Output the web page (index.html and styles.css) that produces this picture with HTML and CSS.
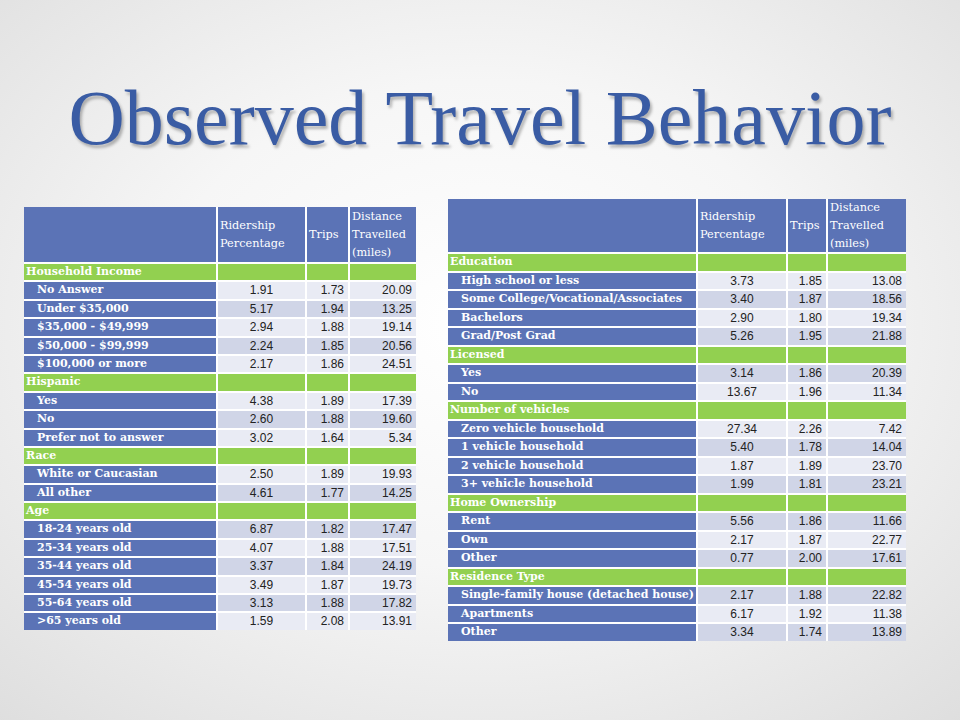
FILE: index.html
```html
<!DOCTYPE html>
<html>
<head>
<meta charset="utf-8">
<link rel="stylesheet" href="styles.css">
</head>
<body>
<div class="slide">
  <h1 class="title">Observed Travel Behavior</h1>
  <div class="tables">
    <div class="tbl tbl-left">
      <div class="hd"></div><div class="hd">Ridership Percentage</div><div class="hd">Trips</div><div class="hd">Distance Travelled (miles)</div>

      <div class="row cat"><div class="lab">Household Income</div><div></div><div></div><div></div></div>
      <div class="row"><div class="lab">No Answer</div><div class="c">1.91</div><div class="r">1.73</div><div class="r">20.09</div></div>
      <div class="row dk"><div class="lab">Under $35,000</div><div class="c">5.17</div><div class="r">1.94</div><div class="r">13.25</div></div>
      <div class="row"><div class="lab">$35,000 - $49,999</div><div class="c">2.94</div><div class="r">1.88</div><div class="r">19.14</div></div>
      <div class="row dk"><div class="lab">$50,000 - $99,999</div><div class="c">2.24</div><div class="r">1.85</div><div class="r">20.56</div></div>
      <div class="row"><div class="lab">$100,000 or more</div><div class="c">2.17</div><div class="r">1.86</div><div class="r">24.51</div></div>
      <div class="row cat"><div class="lab">Hispanic</div><div></div><div></div><div></div></div>
      <div class="row"><div class="lab">Yes</div><div class="c">4.38</div><div class="r">1.89</div><div class="r">17.39</div></div>
      <div class="row dk"><div class="lab">No</div><div class="c">2.60</div><div class="r">1.88</div><div class="r">19.60</div></div>
      <div class="row"><div class="lab">Prefer not to answer</div><div class="c">3.02</div><div class="r">1.64</div><div class="r">5.34</div></div>
      <div class="row cat"><div class="lab">Race</div><div></div><div></div><div></div></div>
      <div class="row"><div class="lab">White or Caucasian</div><div class="c">2.50</div><div class="r">1.89</div><div class="r">19.93</div></div>
      <div class="row dk"><div class="lab">All other</div><div class="c">4.61</div><div class="r">1.77</div><div class="r">14.25</div></div>
      <div class="row cat"><div class="lab">Age</div><div></div><div></div><div></div></div>
      <div class="row dk"><div class="lab">18-24 years old</div><div class="c">6.87</div><div class="r">1.82</div><div class="r">17.47</div></div>
      <div class="row"><div class="lab">25-34 years old</div><div class="c">4.07</div><div class="r">1.88</div><div class="r">17.51</div></div>
      <div class="row dk"><div class="lab">35-44 years old</div><div class="c">3.37</div><div class="r">1.84</div><div class="r">24.19</div></div>
      <div class="row"><div class="lab">45-54 years old</div><div class="c">3.49</div><div class="r">1.87</div><div class="r">19.73</div></div>
      <div class="row dk"><div class="lab">55-64 years old</div><div class="c">3.13</div><div class="r">1.88</div><div class="r">17.82</div></div>
      <div class="row"><div class="lab">&gt;65 years old</div><div class="c">1.59</div><div class="r">2.08</div><div class="r">13.91</div></div>
    </div>

    <div class="tbl tbl-right">
      <div class="hd"></div><div class="hd">Ridership Percentage</div><div class="hd">Trips</div><div class="hd">Distance Travelled (miles)</div>

      <div class="row cat"><div class="lab">Education</div><div></div><div></div><div></div></div>
      <div class="row"><div class="lab">High school or less</div><div class="c">3.73</div><div class="r">1.85</div><div class="r">13.08</div></div>
      <div class="row dk"><div class="lab">Some College/Vocational/Associates</div><div class="c">3.40</div><div class="r">1.87</div><div class="r">18.56</div></div>
      <div class="row"><div class="lab">Bachelors</div><div class="c">2.90</div><div class="r">1.80</div><div class="r">19.34</div></div>
      <div class="row dk"><div class="lab">Grad/Post Grad</div><div class="c">5.26</div><div class="r">1.95</div><div class="r">21.88</div></div>
      <div class="row cat"><div class="lab">Licensed</div><div></div><div></div><div></div></div>
      <div class="row dk"><div class="lab">Yes</div><div class="c">3.14</div><div class="r">1.86</div><div class="r">20.39</div></div>
      <div class="row"><div class="lab">No</div><div class="c">13.67</div><div class="r">1.96</div><div class="r">11.34</div></div>
      <div class="row cat"><div class="lab">Number of vehicles</div><div></div><div></div><div></div></div>
      <div class="row"><div class="lab">Zero vehicle household</div><div class="c">27.34</div><div class="r">2.26</div><div class="r">7.42</div></div>
      <div class="row dk"><div class="lab">1 vehicle household</div><div class="c">5.40</div><div class="r">1.78</div><div class="r">14.04</div></div>
      <div class="row"><div class="lab">2 vehicle household</div><div class="c">1.87</div><div class="r">1.89</div><div class="r">23.70</div></div>
      <div class="row dk"><div class="lab">3+ vehicle household</div><div class="c">1.99</div><div class="r">1.81</div><div class="r">23.21</div></div>
      <div class="row cat"><div class="lab">Home Ownership</div><div></div><div></div><div></div></div>
      <div class="row dk"><div class="lab">Rent</div><div class="c">5.56</div><div class="r">1.86</div><div class="r">11.66</div></div>
      <div class="row"><div class="lab">Own</div><div class="c">2.17</div><div class="r">1.87</div><div class="r">22.77</div></div>
      <div class="row dk"><div class="lab">Other</div><div class="c">0.77</div><div class="r">2.00</div><div class="r">17.61</div></div>
      <div class="row cat"><div class="lab">Residence Type</div><div></div><div></div><div></div></div>
      <div class="row dk"><div class="lab">Single-family house (detached house)</div><div class="c">2.17</div><div class="r">1.88</div><div class="r">22.82</div></div>
      <div class="row"><div class="lab">Apartments</div><div class="c">6.17</div><div class="r">1.92</div><div class="r">11.38</div></div>
      <div class="row dk"><div class="lab">Other</div><div class="c">3.34</div><div class="r">1.74</div><div class="r">13.89</div></div>
    </div>
  </div>
</div>
</body>
</html>
```

FILE: styles.css
```css
html, body {
  margin: 0;
  padding: 0;
}
body {
  width: 960px;
  height: 720px;
  overflow: hidden;
  background: radial-gradient(ellipse 75% 75% at 50% 45%, #ffffff 0%, #f6f6f6 45%, #dedede 100%);
}
.slide {
  width: 960px;
  height: 720px;
  box-sizing: border-box;
  padding-top: 79px;
}
.title {
  margin: 0;
  font-family: "Liberation Serif", serif;
  font-weight: normal;
  font-size: 78px;
  line-height: 77px;
  text-align: center;
  color: #3a5ca4;
  text-shadow: 2px 3px 3px rgba(0, 0, 0, 0.28);
}
.tables {
  display: flex;
  align-items: flex-start;
  gap: 32px;
  padding-left: 24px;
  margin-top: 43px;
}
.tbl {
  display: grid;
  gap: 2px;
  background: #ffffff;
  grid-auto-rows: 16.4px;
}
.tbl-left {
  margin-top: 8px;
  grid-template-columns: 192px 87px 41px 66px;
  grid-template-rows: 55px;
}
.tbl-right {
  grid-template-columns: 248px 88px 38px 78px;
  grid-template-rows: 53px;
  grid-auto-rows: 16.5px;
}
.row {
  display: contents;
}
.hd {
  background: #5b73b6;
  color: #ffffff;
  font-family: "DejaVu Serif", serif;
  font-size: 11.3px;
  line-height: 18px;
  display: flex;
  align-items: center;
  padding-left: 2px;
}
.lab {
  background: #5b73b6;
  color: #ffffff;
  font-family: "DejaVu Serif", serif;
  font-weight: bold;
  font-size: 11px;
  line-height: 16.4px;
  padding-left: 13px;
  white-space: nowrap;
  overflow: hidden;
}
.c, .r {
  background: #e9ebf4;
  color: #222;
  font-family: "Liberation Sans", sans-serif;
  font-size: 12px;
  line-height: 16.4px;
}
.dk .c, .dk .r {
  background: #d0d5e7;
}
.c {
  text-align: center;
}
.r {
  text-align: right;
  padding-right: 4px;
}
.cat > div {
  background: #92d050;
}
.cat .lab {
  padding-left: 2px;
}
```
